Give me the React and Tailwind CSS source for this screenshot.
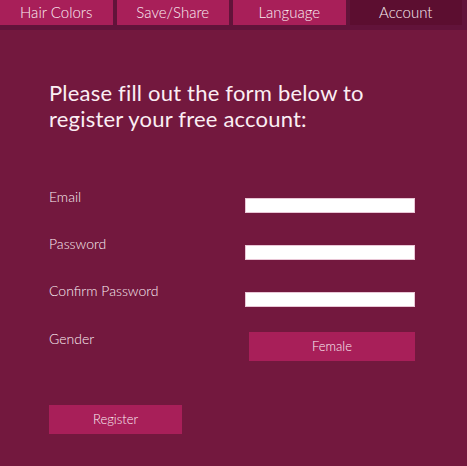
import React from "react";

const tabs = [
  { label: "Hair Colors", active: false },
  { label: "Save/Share", active: false },
  { label: "Language", active: false },
  { label: "Account", active: true },
];

const fields = ["Email", "Password", "Confirm Password"];

export default function App() {
  return (
    <div
      className="w-[467px] h-[466px] bg-[#73183e] text-[#fbeef3] overflow-hidden"
      style={{ fontFamily: "'Lato', 'Open Sans', sans-serif" }}
    >
      {/* top navigation */}
      <div className="flex gap-[4px] h-[30px] bg-[#62133a] pr-[5px]">
        {tabs.map((t) => (
          <div
            key={t.label}
            className={`w-[113px] h-[25px] flex items-center justify-center text-[15px] font-light ${
              t.active ? "bg-[#5c0e30]" : "bg-[#a81f59]"
            }`}
          >
            {t.label}
          </div>
        ))}
      </div>

      <div className="pl-[49px] pt-[50px]">
        <h1 className="text-[22px] leading-[26px] font-normal tracking-[0.2px]">
          Please fill out the form below to
          <br />
          register your free account:
        </h1>

        <div className="mt-[62px] flex flex-col gap-[32px]">
          {fields.map((f) => (
            <div key={f} className="flex h-[15px]">
              <span className="w-[196px] text-[14px] font-light leading-[15px] -mt-[5px]">
                {f}
              </span>
              <input
                type={f === "Email" ? "email" : "password"}
                className="w-[170px] h-[15px] mt-[4px] bg-white border border-[#e9c6d6] outline-none"
              />
            </div>
          ))}
          <div className="flex -mt-[3px]">
            <span className="w-[200px] text-[14px] font-light leading-[15px] -mt-[1px]">
              Gender
            </span>
            <button className="w-[166px] h-[29px] bg-[#a81f59] text-[13px] font-light text-[#fbeef3]">
              Female
            </button>
          </div>
        </div>

        <button className="mt-[44px] w-[133px] h-[29px] bg-[#a81f59] text-[13px] font-light text-[#fbeef3]">
          Register
        </button>
      </div>
    </div>
  );
}
